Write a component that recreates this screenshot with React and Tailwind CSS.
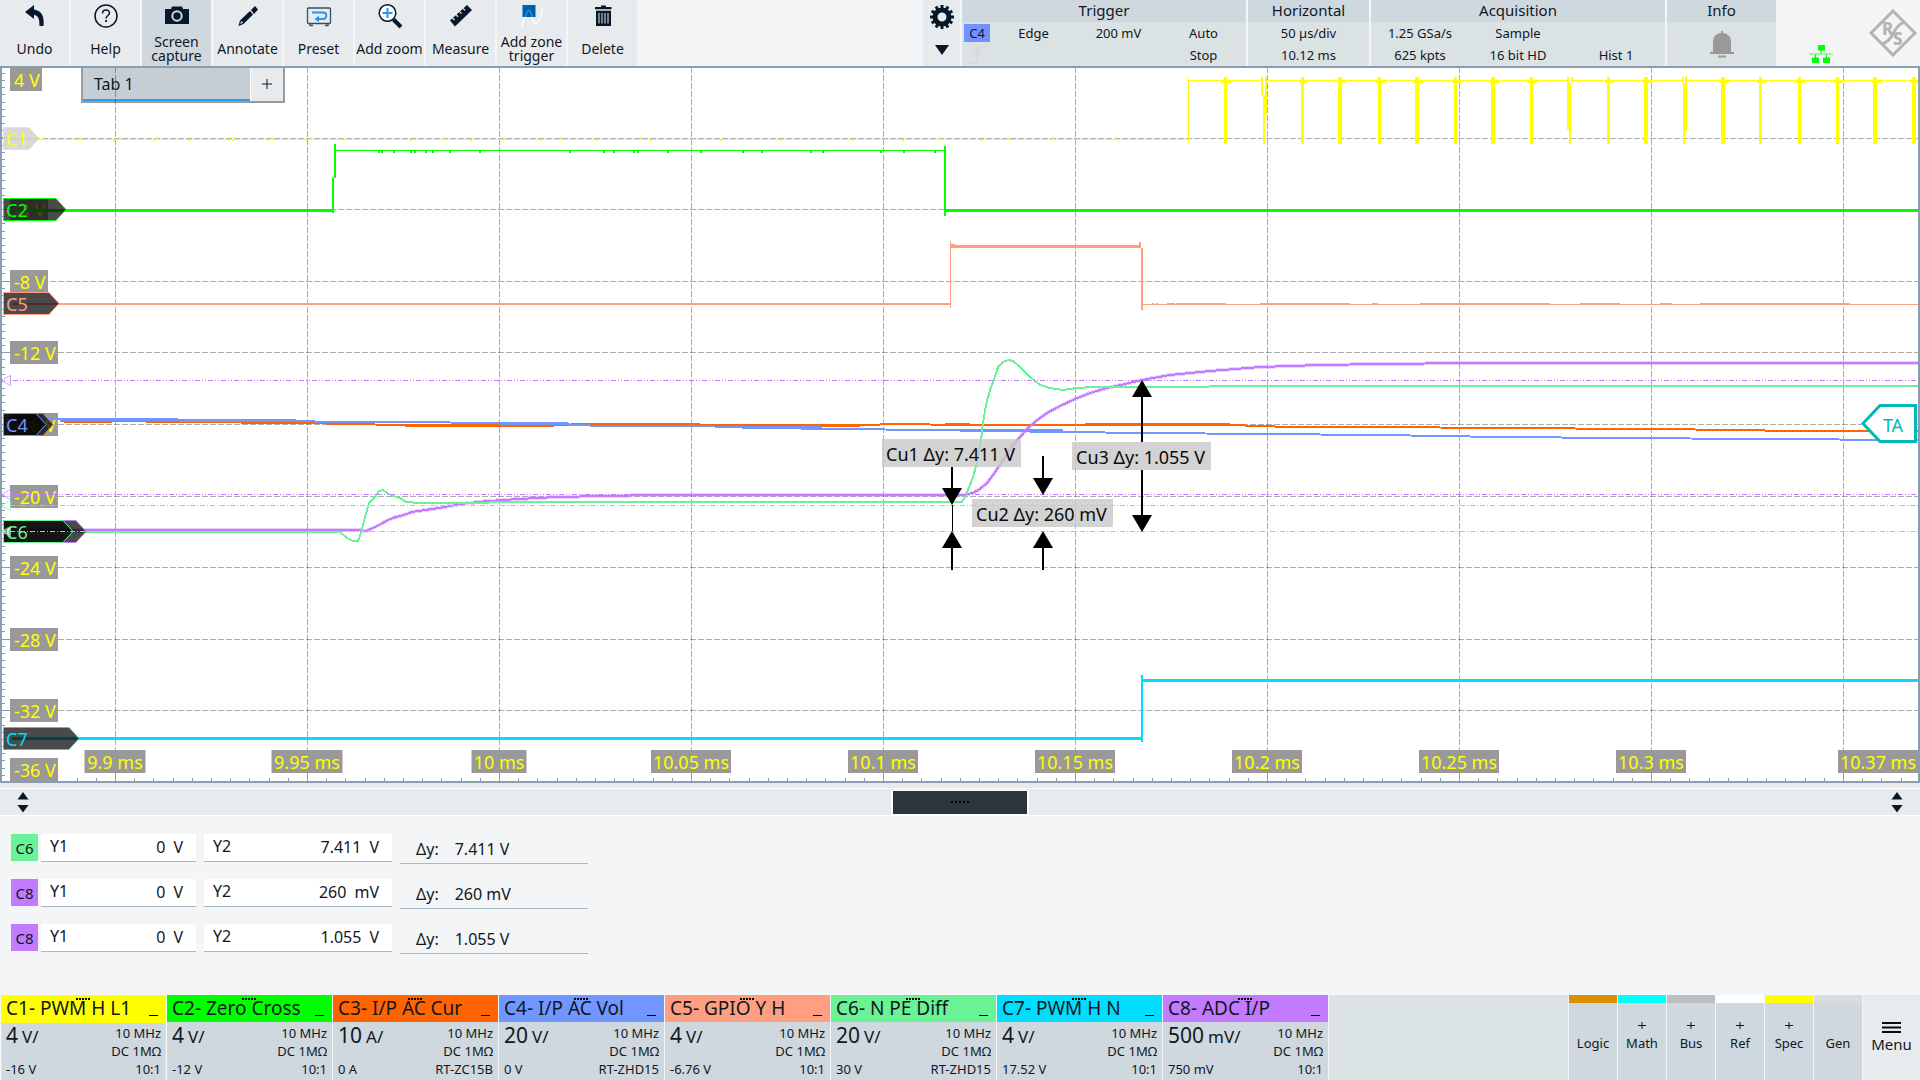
import React from "react";

const TOOLS = [
  { label: "Undo", icon: "undo" },
  { label: "Help", icon: "help" },
  { label: "Screen capture", icon: "camera", active: true },
  { label: "Annotate", icon: "pencil" },
  { label: "Preset", icon: "preset" },
  { label: "Add zoom", icon: "zoom" },
  { label: "Measure", icon: "ruler" },
  { label: "Add zone trigger", icon: "zone" },
  { label: "Delete", icon: "trash" },
];

const INK = "#06182a";

function ToolIcon({ name }) {
  switch (name) {
    case "undo":
      return (
        <svg width="28" height="28" viewBox="0 0 28 28" aria-hidden="true">
          <path d="M4 10 L13 3 V7.500 C21 8.500 23.500 15 22.500 24 H18.500 C18.500 17.500 17.500 13.500 13 13 V17 Z" fill={INK} />
        </svg>
      );
    case "help":
      return (
        <svg width="28" height="28" viewBox="0 0 28 28" aria-hidden="true">
          <circle cx="14" cy="14" r="11" fill="none" stroke={INK} strokeWidth="1.500" />
          <path d="M10.500 11.500 C10.500 7 17.500 7 17.500 11 C17.500 13.500 14 13.500 14 16.500" fill="none" stroke={INK} strokeWidth="1.500" />
          <rect x="13.200" y="18" width="1.800" height="2" fill={INK} />
        </svg>
      );
    case "camera":
      return (
        <svg width="28" height="28" viewBox="0 0 28 28" aria-hidden="true">
          <path d="M2 7 H8 L9 4.500 H19 L20 7 H26 V22 H2 Z" fill={INK} />
          <circle cx="14" cy="14" r="4.700" fill="none" stroke="#cfd7df" strokeWidth="2" />
        </svg>
      );
    case "pencil":
      return (
        <svg width="28" height="28" viewBox="0 0 28 28" aria-hidden="true">
          <path d="M17 8 L21 4 L24 7.500 L20 12 Z" fill={INK} />
          <path d="M16 9 L19 12.500 L9.500 22 L4.500 24 L6 18.500 Z" fill={INK} />
          <path d="M7.500 19 L9 20.700 L6 22 Z" fill="#e7ebee" />
        </svg>
      );
    case "preset":
      return (
        <svg width="28" height="28" viewBox="0 0 28 28" aria-hidden="true">
          <rect x="2.500" y="6" width="23" height="15.500" rx="1" fill="none" stroke="#3c4d5c" strokeWidth="1.300" />
          <path d="M5 22 V23.500 H8 M20 23.500 H23 V22" fill="none" stroke="#3c4d5c" strokeWidth="1.300" />
          <path d="M7 10.500 H18 C22.500 10.500 22.500 17 18 17 H12" fill="none" stroke="#1e96fa" strokeWidth="1.800" />
          <path d="M9.500 17 L14 13.700 V20.300 Z" fill="#1e96fa" />
        </svg>
      );
    case "zoom":
      return (
        <svg width="28" height="28" viewBox="0 0 28 28" aria-hidden="true">
          <path d="M17.500 17.500 L25 25" stroke={INK} strokeWidth="4" />
          <circle cx="11.500" cy="11" r="8.300" fill="#fff" stroke={INK} strokeWidth="1.500" />
          <path d="M6.500 11 H16.500 M11.500 6 V16" stroke="#1e96fa" strokeWidth="2" />
        </svg>
      );
    case "ruler":
      return (
        <svg width="28" height="28" viewBox="0 0 28 28" aria-hidden="true">
          <path d="M3 18.500 L20 3 L25 8 L8 24.500 Z" fill={INK} />
          <path d="M5.500 16 L7.500 18 M9 12.800 L11 14.800 M12.500 9.600 L14.500 11.600 M16 6.400 L18 8.400" stroke="#e7ebee" strokeWidth="1.300" />
        </svg>
      );
    case "zone":
      return (
        <svg width="28" height="28" viewBox="0 0 28 28" aria-hidden="true">
          <rect x="4.500" y="3" width="13" height="12" fill="#0060a8" />
          <path d="M4 25 C5 18 6.500 16 7.500 15 M14 15 C15 19 15.500 21.500 17.500 21.500 C21.500 21.500 23.500 13 24.500 5" fill="none" stroke="#fff" strokeWidth="1.300" />
          <path d="M7.500 15 C9.500 6 12 6 14 15" fill="none" stroke="#1e96fa" strokeWidth="1.300" />
        </svg>
      );
    default:
      return (
        <svg width="28" height="28" viewBox="0 0 28 28" aria-hidden="true">
          <path d="M6 5 H12 V3.500 H17 V5 H22.500 V7.300 H6 Z" fill={INK} />
          <path d="M7 8.700 H22 V24 H7 Z" fill={INK} />
          <path d="M10 11 V21.500 M13 11 V21.500 M16 11 V21.500 M19 11 V21.500" stroke="#e7ebee" strokeWidth="1" />
        </svg>
      );
  }
}

function Toolbar() {
  return (
    <div className="flex">
      {TOOLS.map((t) => (
        <button
          key={t.label}
          className={
            "mr-0.5 flex w-[69px] flex-col items-center text-sm leading-[14px] " +
            (t.active ? "bg-[#cfd7df]" : "bg-[#e7ebee]")
          }
        >
          <span className="flex h-8 items-center justify-center">
            <ToolIcon name={t.icon} />
          </span>
          <span className="flex h-[34px] items-center justify-center text-center whitespace-nowrap">
            {t.label === "Screen capture" ? (
              <span>Screen<br />capture</span>
            ) : t.label === "Add zone trigger" ? (
              <span>Add zone<br />trigger</span>
            ) : (
              t.label
            )}
          </span>
        </button>
      ))}
    </div>
  );
}

function Gear() {
  const teeth = Array.from({ length: 12 }, (_, i) => i * 30);
  return (
    <svg width="26" height="26" viewBox="-13 -13 26 26" aria-hidden="true">
      <circle r="7" fill="none" stroke={INK} strokeWidth="5" />
      {teeth.map((a) => (
        <rect key={a} x="-1.500" y="-12" width="3" height="4" fill={INK} transform={`rotate(${a})`} />
      ))}
    </svg>
  );
}

function StatusPanel({ title, className, children }) {
  return (
    <button className={"mr-0.5 flex flex-col bg-[#dbe2e4] text-[13px] leading-[22px] " + className}>
      <span className="h-[22px] w-full bg-[#cfd7df] text-center text-[15px] leading-5">{title}</span>
      {children}
    </button>
  );
}

function TopBar() {
  return (
    <header className="flex h-[66px]">
      <Toolbar />
      <div className="flex-1" />
      <button aria-label="Toolbar settings" className="mr-0.5 flex w-[37px] flex-col items-center gap-[15px] bg-[#e7ebee] pt-1">
        <Gear />
        <svg width="14" height="11" viewBox="0 0 14 11" aria-hidden="true">
          <path d="M0 0 H14 L7 10 Z" fill={INK} />
        </svg>
      </button>
      <StatusPanel title="Trigger" className="w-[284px]">
        <span className="grid w-full grid-cols-[29px_1fr_1fr_1fr] text-center">
          <span className="ml-0.5 mt-0.5 h-[18px] w-[26px] bg-[#7191ff] text-[13px] leading-[18px]">C4</span>
          <span>Edge</span>
          <span>200 mV</span>
          <span>Auto</span>
          <svg className="ml-1.5 mt-0.5" width="18" height="18" viewBox="0 0 18 18" aria-hidden="true">
            <path d="M0 17 H9 V1 H17 M5 10 L9 4 L13 10" fill="none" stroke="#d3d6d6" strokeWidth="1.200" />
          </svg>
          <span />
          <span />
          <span>Stop</span>
        </span>
      </StatusPanel>
      <StatusPanel title="Horizontal" className="w-[121px]">
        <span className="flex w-full flex-col text-center">
          <span>50 µs/div</span>
          <span>10.12 ms</span>
        </span>
      </StatusPanel>
      <StatusPanel title="Acquisition" className="w-[294px]">
        <span className="grid w-full grid-cols-3 text-center">
          <span>1.25 GSa/s</span>
          <span>Sample</span>
          <span />
          <span>625 kpts</span>
          <span>16 bit HD</span>
          <span>Hist 1</span>
        </span>
      </StatusPanel>
      <StatusPanel title="Info" className="w-[109px]">
        <span className="flex w-full justify-center pt-2">
          <svg width="24" height="28" viewBox="0 0 24 28" aria-hidden="true">
            <path d="M11 1 H13 V3 C18 3.500 21 7 21 12 V22 H24 V24 H0 V22 H3 V12 C3 7 6 3.500 11 3 Z M8 25.500 H16 V27.500 H8 Z" fill="#999" />
          </svg>
        </span>
      </StatusPanel>
      <div className="flex w-[142px] items-start justify-between pl-[31px] pr-[3px]">
        <svg className="mt-[45px]" width="24" height="18" viewBox="0 0 24 18" aria-label="LAN connected">
          <path d="M12 5 V9 M6.500 9 V13 M17.500 9 V13" stroke="#00e000" strokeWidth="1" />
          <path d="M0 9 H24" stroke="#7dff7d" strokeWidth="1.500" />
          <path d="M9 0 H16 V5.500 H9 Z M3 12.500 H10 V18 H3 Z M14 12.500 H21 V18 H14 Z" fill="#00ff00" />
        </svg>
        <svg className="mt-[9px]" width="48" height="48" viewBox="0 0 48 48" role="img" aria-label="R&S">
          <path d="M24 2 L46 24 L24 46 L2 24 Z" fill="none" stroke="#b3b3b3" strokeWidth="3" />
          <path d="M35 13 C27 17 26 21 24 25 C22 29 19 33 13 35" fill="none" stroke="#b3b3b3" strokeWidth="3" />
          <text x="13" y="26" fontSize="17" fontWeight="800" fill="#b3b3b3">R</text>
          <text x="24" y="36" fontSize="17" fontWeight="800" fill="#b3b3b3">S</text>
        </svg>
      </div>
    </header>
  );
}

const GRID_X = [115, 307, 499, 691, 883, 1075, 1267, 1459, 1651, 1843];
const GRID_Y = [138, 209, 281, 352, 424, 496, 567, 639, 710];
const X_LABELS = [
  ["9.9 ms", 115, 61], ["9.95 ms", 307, 71], ["10 ms", 499, 55], ["10.05 ms", 691, 80],
  ["10.1 ms", 883, 70], ["10.15 ms", 1075, 80], ["10.2 ms", 1267, 70], ["10.25 ms", 1459, 80],
  ["10.3 ms", 1651, 70], ["10.37 ms", 1878, 80],
];
const Y_LABELS = [
  ["4 V", 68, 32], ["-4 V", 198, 38], ["-8 V", 270, 38], ["-12 V", 341, 48], ["-16 V", 413, 48],
  ["-20 V", 485, 48], ["-24 V", 556, 48], ["-28 V", 628, 48], ["-32 V", 699, 48], ["-36 V", 758, 48],
];

const C1_BUMPS = [76, 113, 153, 189, 228, 232, 267, 305, 343, 410, 470, 540, 596, 650, 720, 780, 852, 902, 981];
const C1_UP = [42, 79, 119, 156, 233, 271, 310, 443, 503, 560, 640, 939, 1007, 1052, 1114];
const C2_BUMPS = [378, 381, 393, 410, 414, 425, 432, 449, 479, 569, 603, 613, 633, 637, 667, 700, 742, 761, 810, 822, 880, 903, 934];
const PULSES = [
  [1225, 3], [1302, 3], [1340, 4], [1379, 3], [1417, 4], [1455, 3], [1493, 4], [1531, 3], [1608, 3],
  [1646, 4], [1723, 4], [1760, 3], [1799, 3], [1837, 3], [1875, 4], [1914, 4],
];

const BLUE =
  "8,418 60,419 110,420 240,420 300,421 330,422 400,422 500,423 560,424 600,426 700,426 760,428 840,429 930,430 1000,431 1060,432 1150,433 1260,434 1380,435 1500,437 1620,438 1760,439 1918,440";
const ORANGE =
  "60,421 110,421 180,422 300,423 400,425 500,426 545,426 580,424 690,424 710,425 860,425 900,424 960,425 1080,425 1100,424 1230,425 1290,427 1380,427 1500,428 1650,429 1740,430 1790,431 1918,431";
const PURPLE =
  "12,530 180,530 355,530 366,531 373,528 381,524 388,520 396,517 404,515 412,512 425,510 439,508 461,504 488,501 519,499 557,497 603,496 657,495 950,495 962,495 973,493 980,489 987,483 993,475 1000,465 1013,445 1020,437 1027,429 1036,421 1047,413 1060,406 1075,399 1090,393 1107,388 1125,384 1142,380 1170,375 1190,373 1210,371 1235,369 1260,367 1320,365 1380,364 1470,363 1918,363";
const MINT =
  "12,532 340,532 347,538 353,541 358,541 361,533 365,517 369,503 375,497 379,491 383,490 387,493 393,496 400,498 406,502 420,503 560,502 962,502 965,497 972,480 977,463 981,440 983,423 986,405 990,390 995,377 998,367 1003,362 1008,360 1013,361 1020,367 1030,377 1040,385 1050,388 1063,390 1077,388 1093,387 1208,387 1210,386 1918,386";

function Tag({ y, w, color, text, light }) {
  return (
    <g>
      <path
        d={`M3.500 ${y + 0.5} H${w} L${w + 10} ${y + 11.5} L${w} ${y + 22.5} H3.500 Z`}
        fill={light ? "#d2d2d2" : "#000"}
        fillOpacity={light ? 0.85 : 0.71}
        stroke={color}
      />
      {text && (
        <text x="6" y={y + 19} fill={color}>{text}</text>
      )}
    </g>
  );
}

function ArrowHead({ x, y, up }) {
  const d = up ? `M${x} ${y} l10 17 h-20 Z` : `M${x} ${y} l10 -17 h-20 Z`;
  return <path d={d} />;
}

function CursorLabel({ x, y, w, text }) {
  return (
    <g>
      <rect x={x} y={y} width={w} height="28" fill="#c8c8c8" fillOpacity="0.8" />
      <text x={x + 4} y={y + 22} fill="#0a0a0a">{text}</text>
    </g>
  );
}

function Handle({ y, color }) {
  return <path d={`M10.500 ${y - 5} V${y + 5} L1 ${y} Z`} fill="#fff" fillOpacity="0.600" stroke={color} strokeDasharray="2 1" />;
}

function Waveforms() {
  const yTicks = [];
  for (let i = 0; i < 99; i += 1) yTicks.push(73.5 + Math.round(i * 7.16));
  const xTicks = [];
  for (let i = -3; i < 94; i += 1) xTicks.push(115.5 + Math.round(i * 19.2));
  return (
    <svg
      className="pointer-events-none relative block w-full"
      viewBox="0 66 1920 717"
      fontSize="18"
      role="img"
      aria-label="Oscilloscope waveforms C1 to C8"
    >
      <g stroke="#000" strokeOpacity="0.320" strokeDasharray="6 2">
        {GRID_X.map((x) => <path key={x} d={`M${x + 0.5} 67 V780`} />)}
        {GRID_Y.map((y) => <path key={y} d={`M2 ${y + 0.5} H1918`} />)}
      </g>

      <g stroke="#8a9eb0" strokeWidth="1">
        {yTicks.filter((y) => y < 780).map((y) => <path key={y} d={`M2 ${y} H5`} />)}
        {GRID_Y.map((y) => <path key={y} d={`M2 ${y + 0.5} H10`} />)}
        {xTicks.filter((x) => x > 50 && x < 1918).map((x) => <path key={x} d={`M${x} 778 V781`} />)}
        {GRID_X.map((x) => <path key={x} d={`M${x + 0.5} 773 V781`} />)}
      </g>

      {Y_LABELS.map(([t, y, w]) => (
        <g key={t}>
          <rect x="10" y={y === 68 ? 66 : y} width={w} height={y === 68 ? 25 : 23} fill="#999" />
          <text x="14" y={y + 19} fill="#ff0">{t}</text>
        </g>
      ))}

      <g fill="none" shapeRendering="crispEdges">
        <path d="M8 139.500 H1188 M1188 80.500 H1263 M1266 80.500 H1567 M1573 80.500 H1683 M1687 80.500 H1918" stroke="#ff0" />
        <path d="M1188.500 143 V77" stroke="#ff0" />
        {C1_BUMPS.map((x) => <path key={x} d={`M${x} 140 h2`} stroke="#ff0" strokeWidth="2" />)}
        {C1_UP.map((x) => <path key={x} d={`M${x} 138 h2`} stroke="#ff0" strokeWidth="2" />)}
        {PULSES.map(([x, w]) => <path key={x} d={`M${w === 3 ? x + 0.5 : x} 77 V144`} stroke="#ff0" strokeWidth={w} />)}
        {PULSES.map(([x]) => <path key={x} d={`M${x - 3} 82 h9`} stroke="#ff0" strokeWidth="2" />)}
        <path d="M1262 77 V95 M1266 77 V115 M1264 95 V144" stroke="#ff0" strokeWidth="2" />
        <path d="M1568 77 V130 M1572 77 V83 M1570 83 V144" stroke="#ff0" strokeWidth="2" />
        <path d="M1683 77 V83 M1686 76 V131 M1684 83 V144" stroke="#ff0" strokeWidth="2" />

        <path d="M12 210.500 H332" stroke="#0f0" strokeWidth="3" />
        <path d="M333 213 V178 M335 178 V144" stroke="#0f0" strokeWidth="2" />
        <path d="M334 150.500 H945" stroke="#0f0" />
        {C2_BUMPS.map((x) => <path key={x} d={`M${x} 152 h2`} stroke="#0f0" strokeWidth="2" />)}
        <path d="M945 146 V216" stroke="#0f0" strokeWidth="2" />
        <path d="M945 210.500 H1918" stroke="#0f0" strokeWidth="3" />

        <path d="M12 304 H951" stroke="#ff9e80" strokeWidth="2" />
        <path d="M950.500 241 V308" stroke="#ff9e80" />
        <path d="M955 246.500 H1141" stroke="#ff9e80" strokeWidth="3" />
        <path d="M951 246 H955" stroke="#ff9e80" strokeWidth="4" />
        <path d="M1140 242 V248 M1142 248 V310" stroke="#ff9e80" strokeWidth="2" />
        <path d="M1142 304.500 H1918" stroke="#ff9e80" />
        <path d="M1152 304 h2 M1156 304 h2 M1167 304 h8 M1176 304 h50 M1260 304 h90 M1372 304 h6 M1420 304 h130 M1580 304 h40 M1660 304 h12 M1700 304 h150" stroke="#ff9e80" strokeWidth="2" />

        <polyline points={ORANGE} stroke="#ff6400" strokeWidth="2" />
        <path d="M64 421.500 H112 M405 425.500 H540 M702 425.500 H860 M945 424.500 H970 M1085 424.500 H1230" stroke="#ff6400" strokeWidth="3" />
        <polyline points={BLUE} stroke="#7196ff" strokeWidth="2" />
        <path d="M60 419.500 H178 M180 420.500 H296 M500 423.500 H568 M742 427.500 H822 M960 430.500 H1063" stroke="#7196ff" strokeWidth="3" />
        <polyline points={PURPLE} stroke="#c27aff" strokeOpacity="0.350" strokeWidth="4" />
        <polyline points={PURPLE} stroke="#c27aff" strokeWidth="2" />
        <polyline points={MINT} stroke="#69f296" strokeWidth="2" />

        <path d="M12 738.500 H1142" stroke="#0df" strokeWidth="3" />
        <path d="M1142 742 V675" stroke="#0df" strokeWidth="2" />
        <path d="M1142 680.500 H1918" stroke="#0df" strokeWidth="3" />
      </g>

      {X_LABELS.map(([t, x, w]) => (
        <g key={t}>
          <rect x={x - w / 2} y="750" width={w} height="23" fill="#999" />
          <text x={x} y="769" textAnchor="middle" fill="#ff0">{t}</text>
        </g>
      ))}

      <Tag y={127} w={29} color="#ffff00" text="C1" light />
      <Tag y={198} w={56} color="#00ff00" text="C2" />
      <Tag y={292} w={49} color="#ff9e80" text="C5" />
      <Tag y={413} w={43} color="#ff6400" />
      <Tag y={413} w={36} color="#7196ff" text="C4" />
      <Tag y={520} w={76} color="#c27aff" />
      <Tag y={520} w={63} color="#69f296" text="C6" />
      <Tag y={727} w={69} color="#00ddff" text="C7" />

      <g fill="none">
        <path d="M0 380.500 H1918 M0 494.500 H1918" stroke="#c27aff" strokeDasharray="5 2 1 2 1 2" />
        <path d="M0 505.500 H1918 M0 531.500 H1918" stroke="#69f296" strokeDasharray="5 2 1 2" />
      </g>
      <Handle y={380.5} color="#c27aff" />
      <Handle y={494.5} color="#c27aff" />
      <Handle y={505.5} color="#69f296" />
      <Handle y={531.5} color="#69f296" />

      <g fill="#000">
        <path d="M952 467 V495 M952 545 V570 M1043 456 V480 M1043 545 V570 M1142 390 V442 M1142 470 V520" stroke="#000" strokeWidth="2" />
        <path d="M952.500 505 V531" stroke="#000" />
        <ArrowHead x={952} y={505} />
        <ArrowHead x={952} y={531} up />
        <ArrowHead x={1043} y={495} />
        <ArrowHead x={1043} y={531} up />
        <ArrowHead x={1142} y={380} up />
        <ArrowHead x={1142} y={532} />
      </g>
      <CursorLabel x={882} y={439} w={139} text="Cu1 Δy: 7.411 V" />
      <CursorLabel x={972} y={499} w={141} text="Cu2 Δy: 260 mV" />
      <CursorLabel x={1072} y={442} w={139} text="Cu3 Δy: 1.055 V" />

      <path d="M1863 423.500 L1880 405.500 H1915.500 V441.500 H1880 Z" fill="#fff" stroke="#00b8b8" strokeWidth="3" />
      <text x="1893" y="432" textAnchor="middle" fill="#00b8b8">TA</text>

      <path d="M1 66 V782 H1919 V66" fill="none" stroke="#8a9eb0" strokeWidth="2" />
      <path d="M0 67 H1920" stroke="#8a9eb0" strokeWidth="2" />
    </svg>
  );
}

function Diagram() {
  return (
    <section className="relative bg-white">
      <div className="absolute left-[81px] top-0 flex h-[37px] w-[204px] border-2 border-t-0 border-[#9b9b9b] text-base">
        <button className="w-[167px] border-b-2 border-[#2a9df4] bg-[#c4ced4] pl-[11px] pt-0.5 text-left">Tab 1</button>
        <button aria-label="Add tab" className="ml-px flex flex-1 items-center justify-center bg-[#e7ebee]">
          <svg width="10" height="10" viewBox="0 0 10 10" aria-hidden="true">
            <path d="M5 0 V10 M0 5 H10" stroke={INK} strokeWidth="1" />
          </svg>
        </button>
      </div>
      <Waveforms />
    </section>
  );
}

function UpDown() {
  return (
    <svg width="12" height="22" viewBox="0 0 12 22" aria-hidden="true">
      <path d="M6 1 L11.500 8.500 H0.500 Z M6 21.500 L11.500 14 H0.500 Z" fill={INK} />
    </svg>
  );
}

function Splitter() {
  return (
    <div className="border-t-5 border-[#e7ebee]">
      <div className="flex h-7 items-center justify-between border-y border-white bg-[#e7ebee] px-[17px]">
        <UpDown />
        <button aria-label="Resize result area" className="flex h-[25px] w-[138px] items-center justify-center gap-[2px] border-x-2 border-y border-white bg-[#2b363c]">
          {[0, 1, 2, 3, 4].map((i) => <span key={i} className="size-[2px] bg-black" />)}
        </button>
        <UpDown />
      </div>
    </div>
  );
}

const CURSORS = [
  { ch: "C6", bg: "bg-[#69f296]", y1: "0", u1: "V", y2: "7.411", u2: "V", d: "7.411 V" },
  { ch: "C8", bg: "bg-[#c27aff]", y1: "0", u1: "V", y2: "260", u2: "mV", d: "260 mV" },
  { ch: "C8", bg: "bg-[#c27aff]", y1: "0", u1: "V", y2: "1.055", u2: "V", d: "1.055 V" },
];

function CursorField({ label, value, unit, className }) {
  return (
    <label className={"flex h-7 items-center border-b border-[#a9b8c5] bg-white pl-[9px] pr-[13px] pb-0.5 text-base leading-5 " + className}>
      <span className="pb-0.5">{label}</span>
      <input className="min-w-0 flex-1 bg-transparent text-right outline-none" defaultValue={value} />
      <span className="ml-2">{unit}</span>
    </label>
  );
}

function CursorPanel() {
  return (
    <section className="flex flex-1 flex-col gap-[17px] pl-[11px] pt-[18px]">
      {CURSORS.map((c, i) => (
        <div key={i} className="flex h-7 gap-2">
          <div className="flex">
            <span className={"mr-[3px] flex h-[27px] w-[27px] items-center justify-center pt-px text-[15px] " + c.bg}>{c.ch}</span>
            <CursorField label="Y1" value={c.y1} unit={c.u1} className="w-[155px]" />
          </div>
          <CursorField label="Y2" value={c.y2} unit={c.u2} className="w-[188px]" />
          <div className="flex h-[30px] w-[188px] items-center gap-4 border-b border-[#a9b8c5] pl-4 text-base">
            <span>Δy:</span>
            <span>{c.d}</span>
          </div>
        </div>
      ))}
    </section>
  );
}

const CHANNELS = [
  { name: "C1- PWM H L1", bg: "bg-[#ffff00]", v: "4", u: "V/", off: "-16 V", probe: "10:1", sel: true },
  { name: "C2- Zero Cross", bg: "bg-[#00ff00]", v: "4", u: "V/", off: "-12 V", probe: "10:1" },
  { name: "C3- I/P AC Cur", bg: "bg-[#ff6400]", v: "10", u: "A/", off: "0 A", probe: "RT-ZC15B" },
  { name: "C4- I/P AC Vol", bg: "bg-[#7196ff]", v: "20", u: "V/", off: "0 V", probe: "RT-ZHD15" },
  { name: "C5- GPIO Y H", bg: "bg-[#ff9e80]", v: "4", u: "V/", off: "-6.76 V", probe: "10:1" },
  { name: "C6- N PE Diff", bg: "bg-[#69f296]", v: "20", u: "V/", off: "30 V", probe: "RT-ZHD15" },
  { name: "C7- PWM H N", bg: "bg-[#00ddff]", v: "4", u: "V/", off: "17.52 V", probe: "10:1" },
  { name: "C8- ADC I/P", bg: "bg-[#c27aff]", v: "500", u: "mV/", off: "750 mV", probe: "10:1" },
];

function Channel({ c }) {
  return (
    <button className="mr-px flex w-[165px] flex-col text-left text-[13px]">
      <span className={"relative flex h-[27px] w-full items-center justify-between pl-[5px] pr-2 text-[19px] leading-[27px] whitespace-nowrap " + c.bg}>
        <span>{c.name}</span>
        <span className="mt-[14px] h-px w-[9px] bg-black" />
        <span className="absolute left-[75px] top-[3px] flex gap-px">
          {[0, 1, 2, 3, 4].map((i) => <span key={i} className="size-[2px] bg-black" />)}
        </span>
      </span>
      <span
        className={
          "flex w-full flex-1 flex-col justify-between border bg-[#cfd7df] pl-1 pr-1 pb-0.5 leading-[18px] " +
          (c.sel ? "border-[#ffff00]" : "border-[#cfd7df]")
        }
      >
        <span className="flex items-start justify-between">
          <span className="flex items-baseline gap-1 text-[21px] leading-6">
            {c.v}
            <span className="text-[17px] leading-6">{c.u}</span>
          </span>
          <span className="flex flex-col pt-px text-right">
            <span>10 MHz</span>
            <span>DC 1MΩ</span>
          </span>
        </span>
        <span className="flex justify-between">
          <span>{c.off}</span>
          <span>{c.probe}</span>
        </span>
      </span>
    </button>
  );
}

const SIGNALS = [
  { name: "Logic", bar: "bg-[#dc8f00]" },
  { name: "Math", bar: "bg-[#00ffff]", plus: true },
  { name: "Bus", bar: "bg-[#bfbfbf]", plus: true },
  { name: "Ref", bar: "bg-white", plus: true },
  { name: "Spec", bar: "bg-[#ffff00]", plus: true },
  { name: "Gen", bar: "bg-[#dcdcdc]" },
];

function SignalBar() {
  return (
    <footer className="flex h-[85px] pl-px">
      <div className="flex">
        {CHANNELS.map((c) => <Channel key={c.name} c={c} />)}
      </div>
      <div className="flex-1 bg-[#dbe2e4]" />
      {SIGNALS.map((s) => (
        <button key={s.name} className="ml-px flex w-12 flex-col items-center bg-[#cfd7df] text-[13px]">
          <span className={"h-2 w-full " + s.bar} />
          <svg className="mt-[18px]" width="8" height="8" viewBox="0 0 8 8" aria-hidden="true">
            {s.plus && <path d="M4 1 V8 M0 4.500 H8" stroke={INK} strokeWidth="1" />}
          </svg>
          <span className="mt-1 leading-5">{s.name}</span>
        </button>
      ))}
      <button className="ml-px flex w-[57px] flex-col items-center bg-[#e7ebee] pt-[27px] text-[15px] leading-[22px]">
        <svg width="19" height="11" viewBox="0 0 19 11" aria-hidden="true">
          <path d="M0 1 H19 M0 5.500 H19 M0 10 H19" stroke="#0a0a0a" strokeWidth="2" />
        </svg>
        Menu
      </button>
    </footer>
  );
}

export default function App() {
  return (
    <div className="flex min-h-screen flex-col bg-[#f3f5f7] font-['Noto_Sans',sans-serif] text-[#10181f]">
      <TopBar />
      <Diagram />
      <Splitter />
      <CursorPanel />
      <SignalBar />
    </div>
  );
}
